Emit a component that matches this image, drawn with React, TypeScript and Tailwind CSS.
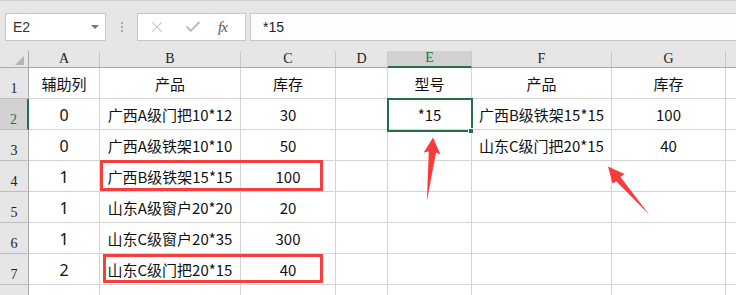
import { X, Check } from 'lucide-react'

const cols = ['A', 'B', 'C', 'D', 'E', 'F', 'G', '']
const widths = ['w-[71px]', 'w-[141px]', 'w-[95px]', 'w-[52px]', 'w-[84px]', 'w-[140px]', 'w-[114px]', 'flex-1']

const rows: string[][] = [
  ['辅助列', '产品', '库存', '', '型号', '产品', '库存', ''],
  ['0', '广西A级门把10*12', '30', '', '*15', '广西B级铁架15*15', '100', ''],
  ['0', '广西A级铁架10*10', '50', '', '', '山东C级门把20*15', '40', ''],
  ['1', '广西B级铁架15*15', '100', '', '', '', '', ''],
  ['1', '山东A级窗户20*20', '20', '', '', '', '', ''],
  ['1', '山东C级窗户20*35', '300', '', '', '', '', ''],
  ['2', '山东C级门把20*15', '40', '', '', '', '', ''],
  ['', '', '', '', '', '', '', ''],
]

const cjk = "font-['Noto_Sans_CJK_SC',sans-serif]"
const heading = "font-['Liberation_Serif','Noto_Sans_CJK_SC',serif]"

function Toolbar() {
  return (
    <div className="h-[51px] border-t border-[#d0d0d0] pt-[12px] flex items-start">
      {/* name box */}
      <div className="ml-[5px] w-[101px] h-[28px] bg-white border border-[#c6c6c6] flex items-center pl-[7px] pr-[6px]">
        <span className="text-[14px] text-[#333] font-['Liberation_Sans',sans-serif]">E2</span>
        <span className="ml-auto w-0 h-0 border-l-[4px] border-r-[4px] border-t-[4px] border-l-transparent border-r-transparent border-t-[#777]" />
      </div>
      <div className="w-[31px] h-[28px] flex flex-col items-center justify-center gap-[2px]">
        <span className="w-[2px] h-[2px] bg-[#a8a8a8]" />
        <span className="w-[2px] h-[2px] bg-[#a8a8a8]" />
        <span className="w-[2px] h-[2px] bg-[#a8a8a8]" />
      </div>
      {/* cancel / enter / function */}
      <div className="w-[109px] h-[28px] bg-white border border-[#c6c6c6] flex items-center">
        <X className="ml-[10px] w-[18px] h-[18px] text-[#bdbdbd]" strokeWidth={1.4} />
        <Check className="ml-[18px] w-[18px] h-[18px] text-[#bdbdbd]" strokeWidth={2.6} />
        <span className="ml-[16px] text-[15px] italic text-[#555] font-['Liberation_Serif',serif] tracking-[-1px]">fx</span>
      </div>
      <div className="ml-[4px] flex-1 h-[28px] bg-[#fdfdfd] border-t border-b border-l border-[#c6c6c6] flex items-center pl-[12px]">
        <span className="text-[14px] text-[#222] font-['Liberation_Sans',sans-serif]">*15</span>
      </div>
    </div>
  )
}

function HeaderRow() {
  return (
    <div className="flex h-[17px] border-b border-[#a8a8a8]">
      <div className="w-[29px] border-r border-[#a8a8a8] flex items-end justify-end pr-[4px] pb-[2px]">
        <svg width={9} height={9} viewBox="0 0 9 9">
          <polygon points="9,0 9,9 0,9" fill="#b4b4b4" />
        </svg>
      </div>
      {cols.map((c, i) => (
        <div
          key={i}
          className={`${widths[i]} ${
            c === 'E' ? 'bg-[#d2d2d2] text-[#217346] border-b-2 border-[#217346] -mb-[1px]' : 'text-[#222]'
          } ${i < cols.length - 1 ? 'border-r border-r-[#c8c8c8]' : ''} flex items-end justify-center pb-[1px] text-[14px] leading-none ${heading}`}
        >
          {c}
        </div>
      ))}
    </div>
  )
}

function Row({ cells, n }: { cells: string[]; n: number }) {
  const active = n === 2
  // the last row is only partly on screen, its number sits below the edge
  const label = n < rows.length ? n : ''
  return (
    <div className="flex h-[31px]">
      <div
        className={`w-[29px] shrink-0 border-b border-[#bdbdbd] flex items-end justify-center pb-[2px] text-[14px] leading-none ${heading} ${
          active ? 'bg-[#d2d2d2] text-[#217346] border-r-2 border-r-[#217346]' : 'text-[#222] border-r border-r-[#a8a8a8]'
        }`}
      >
        {label}
      </div>
      {cells.map((v, i) => (
        <div
          key={i}
          className={`${widths[i]} shrink-0 bg-white border-b border-[#d4d4d4] ${
            i < cells.length - 1 ? 'border-r' : ''
          } flex items-center justify-center pt-[2px] text-[#111] ${
            i === 0 && n > 1 ? "text-[16px] font-['Noto_Sans',sans-serif]" : `text-[15px] ${cjk}`
          }`}
        >
          {v}
        </div>
      ))}
    </div>
  )
}

export default function App() {
  return (
    <div className="relative w-[736px] h-[295px] overflow-hidden bg-[#e6e6e6]">
      <Toolbar />
      <div className="relative">
        <HeaderRow />
        {rows.map((r, i) => (
          <Row key={i} cells={r} n={i + 1} />
        ))}

        {/* active cell E2 */}
        <div className="absolute left-[387px] top-[47px] w-[86px] h-[34px] border-2 border-[#217346]" />
        <div className="absolute left-[468px] top-[77px] w-[6px] h-[6px] bg-[#217346] border border-white" />

        {/* highlighted matches */}
        <div className="absolute left-[100px] top-[109px] w-[223px] h-[31px] border-[3px] border-[#f53e3e]" />
        <div className="absolute left-[103px] top-[203px] w-[220px] h-[29px] border-[3px] border-[#f53e3e]" />
      </div>

      {/* pointer arrows */}
      <svg className="absolute left-0 top-0" width={736} height={295} viewBox="0 0 736 295">
        <polygon points="433,137.5 440.5,154.5 436,152.5 426.8,201.5 428.8,151.5 423.8,152.5" fill="#fb3b3b" />
        <polygon points="608,166.5 624.5,174 620.5,177 649.5,215 616.5,181.5 612.5,183.5" fill="#fb3b3b" />
      </svg>
    </div>
  )
}
